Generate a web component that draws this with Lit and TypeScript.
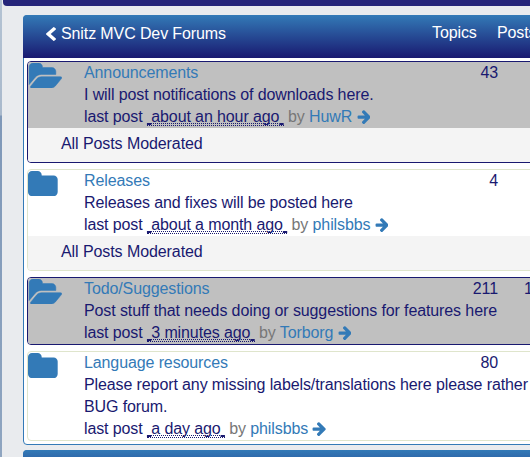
import { LitElement, html, css, svg, nothing } from "lit";
import { customElement, property } from "lit/decorators.js";

const ICONS = {
  open: { box: "0 128 1943 1408", d: "M1943 952q0 31-31 66l-336 396q-43 51-120.5 86.5t-143.5 35.5h-1088q-34 0-60.5-13t-26.5-43q0-31 31-66l336-396q43-51 120.5-86.5t143.5-35.5h1088q34 0 60.5 13t26.5 43zm-343-344v160h-832q-94 0-197 47.5t-164 119.5l-337 396-5 6q0-4-.5-12.5t-.5-12.5v-960q0-92 66-158t158-66h320q92 0 158 66t66 158v32h544q92 0 158 66t66 158z" },
  closed: { box: "64 128 1664 1408", d: "M1728 608v704q0 92-66 158t-158 66h-1216q-92 0-158-66t-66-158v-960q0-92 66-158t158-66h320q92 0 158 66t66 158v32h672q92 0 158 66t66 158z" },
  arrow: { box: "64 158 1536 1581", d: "M1600 960q0 54-37 91l-651 651q-39 37-91 37-51 0-90-37l-75-75q-38-38-38-91t38-91l293-293h-704q-52 0-84.5-37.5t-32.5-90.5v-128q0-53 32.5-90.5t84.5-37.5h704l-293-294q-38-36-38-90t38-90l75-75q38-38 90-38 53 0 91 38l651 651q37 35 37 90z" },
  chevron: { box: "410 26 1036 1612", d: "M1427 301l-531 531 531 531q19 19 19 45t-19 45l-166 166q-19 19-45 19t-45-19l-742-742q-19-19-19-45t19-45l742-742q19-19 45-19t45 19l166 166q19 19 19 45t-19 45z" },
};

const icon = (name: keyof typeof ICONS) =>
  html`<svg class="icon ${name}" viewBox=${ICONS[name].box} preserveAspectRatio="none">${svg`<path d=${ICONS[name].d}></path>`}</svg>`;

interface Forum {
  name: string;
  text: string[];
  when: string;
  by: string;
  topics: string;
  posts?: string;
  active?: boolean;
  moderated?: boolean;
}

const FORUMS: Forum[] = [
  { name: "Announcements", text: ["I will post notifications of downloads here."], when: "about an hour ago", by: "HuwR", topics: "43", active: true, moderated: true },
  { name: "Releases", text: ["Releases and fixes will be posted here"], when: "about a month ago", by: "philsbbs", topics: "4", moderated: true },
  { name: "Todo/Suggestions", text: ["Post stuff that needs doing or suggestions for features here"], when: "3 minutes ago", by: "Torborg", topics: "211", posts: "1", active: true },
  { name: "Language resources", text: ["Please report any missing labels/translations here please rather", "BUG forum."], when: "a day ago", by: "philsbbs", topics: "80" },
];

@customElement("forum-row")
export class ForumRow extends LitElement {
  @property({ attribute: false }) forum!: Forum;

  static styles = css`
    :host { display: block; }
    .card { border: 1px solid #dfe5cc; border-radius: 4px; overflow: hidden; background: #fff; }
    .card.active { border-color: #191970; }
    .main { display: flex; line-height: 22px; }
    .active .main { background: #c0c0c0; }
    .side { width: 56px; flex: none; padding-top: 1px; }
    .info { width: 360px; flex: none; white-space: nowrap; }
    .name, .by { color: #337ab7; }
    .muted { color: #777; }
    .count { flex: none; width: 54px; text-align: right; }
    .posts { flex: none; padding-left: 26px; }
    .note { background: #f4f4f4; height: 34px; line-height: 32px; padding-left: 33px; letter-spacing: -0.08px; }
    .when { border-bottom: 1px dotted #191970; line-height: 16px; display: inline-block; height: 16px; white-space: pre; }
    .ago { text-decoration: underline dotted 1px; text-decoration-skip-ink: none; }
    .edge { text-decoration: underline solid 2px; text-underline-offset: 0.5px; }
    .icon { fill: #337ab7; display: block; }
    .open { width: 33.8px; height: 25.1px; stroke: #337ab7; stroke-width: 30px; }
    .closed { width: 29.7px; height: 25.1px; }
    .arrow { width: 13.7px; height: 14.1px; display: inline-block; vertical-align: -2px; }
  `;

  render() {
    const f = this.forum;
    return html`<div class="card ${f.active ? "active" : ""}">
      <div class="main">
        <div class="side">${icon(f.active ? "open" : "closed")}</div>
        <div class="info">
          <div class="name">${f.name}</div>
          ${f.text.map((t) => html`<div>${t}</div>`)}
          <div>last post <span class="when"><span class="edge"> </span><span class="ago">${f.when}</span><span class="edge"> </span></span> <span class="muted">by</span> <span class="by">${f.by}</span> ${icon("arrow")}</div>
        </div>
        <div class="count">${f.topics}</div>
        ${f.posts ? html`<div class="posts">${f.posts}</div>` : nothing}
      </div>
      ${f.moderated ? html`<div class="note">All Posts Moderated</div>` : nothing}
    </div>`;
  }
}

@customElement("app-root")
export class AppRoot extends LitElement {
  static styles = css`
    :host { display: block; height: 457px; overflow: hidden; box-sizing: border-box; padding-left: 2px; background: linear-gradient(#b4c3d3, #a9b9cc 115px, #7f98b8 116px, #8fa5c0) 0 0 / 2px 100% no-repeat #e9ebee; font: 16px/22px "Liberation Sans", Arial, sans-serif; letter-spacing: -0.11px; color: #191970; }
    .nav { height: 6px; margin-left: 1px; background: #25257a; border-radius: 0 0 0 4px; }
    .panel { width: 620px; box-sizing: border-box; margin: 9px 0 5px 21px; border: 1px solid #337ab7; border-radius: 4px; background: #fff; }
    .head { display: flex; align-items: center; height: 43px; box-sizing: border-box; padding: 0 0 7px 23px; margin: -1px -1px 0; background: linear-gradient(#337ab7, #191970); border-radius: 4px 4px 0 0; color: #fff; }
    .title { width: 371px; margin-left: 5px; padding-top: 2px; }
    .topics { width: 65px; }
    .rows { display: flex; flex-direction: column; gap: 6px; padding: 3px; }
    .icon { fill: #fff; }
    .chevron { width: 10px; height: 14px; margin-top: 1px; }
    .next { height: 40px; margin-top: 0; }
  `;

  render() {
    return html`
      <div class="nav"></div>
      <div class="panel">
        <div class="head">${icon("chevron")}<span class="title">Snitz MVC Dev Forums</span><span class="topics">Topics</span><span>Posts</span></div>
        <div class="rows">${FORUMS.map((f) => html`<forum-row .forum=${f}></forum-row>`)}</div>
      </div>
      <div class="panel next"><div class="head"></div></div>
    `;
  }
}
